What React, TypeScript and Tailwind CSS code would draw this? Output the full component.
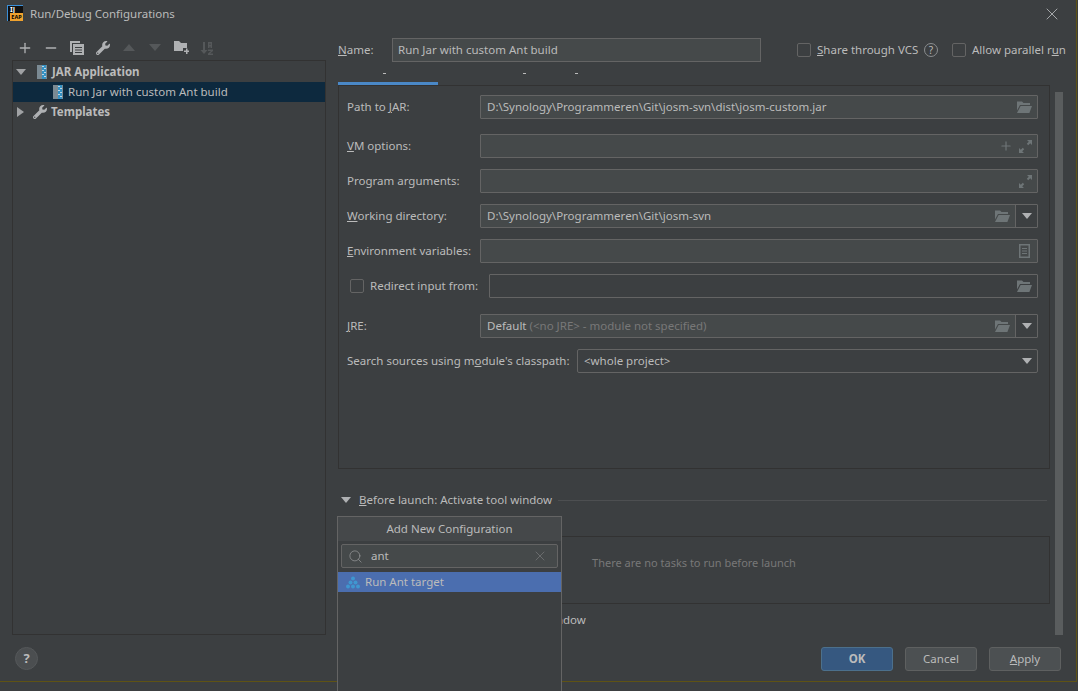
import React from 'react';
import { Plus, Minus, X, Search } from 'lucide-react';
import { FaWrench } from 'react-icons/fa';

const Folder = () => (
  <svg width="16" height="14" viewBox="0 0 16 14" className="shrink-0">
    <path d="M1 1.5h5l1.5 1.5H14v2H4L1 10.5z" fill="#6e7577" />
    <path d="M4.6 6H16l-2.6 7H1z" fill="#6e7577" />
  </svg>
);

const Expand = () => (
  <svg width="13" height="13" viewBox="0 0 13 13" className="shrink-0">
    <path d="M8 0h5v5l-1.8-1.8-2 2-1.4-1.4 2-2z" fill="#6e7577" />
    <path d="M0 8v5h5l-1.8-1.8 2-2-1.4-1.4-2 2z" fill="#6e7577" />
  </svg>
);

const JarIcon = () => (
  <svg width="10" height="14" viewBox="0 0 10 14" className="shrink-0">
    <rect x="0" y="0" width="10" height="14" fill="#7b8a93" />
    <rect x="5" y="0" width="4" height="14" fill="#3592c4" />
    <path d="M5 1h2v1H5zM7 3h2v1H7zM5 5h2v1H5zM7 7h2v1H7zM5 9h2v1H5zM7 11h2v1H7z" fill="#bcd7e8" />
  </svg>
);

const Caret = ({ color = '#afb1b3' }: { color?: string }) => (
  <svg width="10" height="6" viewBox="0 0 10 6" className="shrink-0">
    <path d="M0 0h10L5 6z" fill={color} />
  </svg>
);

const Check = () => <div className="w-[14px] h-[14px] rounded-[2px] border border-[#646464] bg-[#3c3f41] shrink-0" />;

const Tool = ({ children }: { children: React.ReactNode }) => (
  <div className="w-[26px] flex items-center justify-center">{children}</div>
);

const Field = ({
  value,
  children,
  dropdown,
  plain,
}: {
  value?: React.ReactNode;
  children?: React.ReactNode;
  dropdown?: boolean;
  plain?: boolean;
}) => (
  <div className="flex-1 h-6 flex border border-[#646464] rounded-[1px]">
    <div className={`flex-1 flex items-center pl-[6px] pr-[5px] ${plain ? 'bg-[#3c3f41]' : 'bg-[#45494a]'}`}>
      <span className="flex-1 truncate">{value}</span>
      <div className="flex items-center gap-[6px]">{children}</div>
    </div>
    {dropdown && (
      <div className="w-[22px] flex items-center justify-center border-l border-[#646464]">
        <Caret />
      </div>
    )}
  </div>
);

const Row = ({ label, className, children }: { label: React.ReactNode; className: string; children: React.ReactNode }) => (
  <div className={`flex items-center h-6 ${className}`}>
    <div className="w-[133px] shrink-0">{label}</div>
    {children}
  </div>
);

const App = () => {
  return (
    <div className="relative w-[1078px] h-[691px] overflow-hidden bg-[#3c3f41] text-[#bbbbbb] text-[11.5px] font-['Noto_Sans',sans-serif]">
      <div className="w-[1077px] h-[682px] border-r border-b border-[#5f5314] flex flex-col">
        {/* Title bar */}
        <div className="h-[28px] shrink-0 flex items-center pl-[7px] pr-[14px]">
          <div className="w-[16px] h-[16px] mb-[2px] bg-[#111] border-t border-l border-[#3b8fd8] flex flex-col leading-none overflow-hidden">
            <span className="text-[7px] font-bold text-white h-[7px] leading-[7px] pl-[2px]">IJ</span>
            <span className="text-[5.5px] font-bold text-black bg-[#f0a22e] ml-[2px] text-center h-[8px] leading-[8px]">EAP</span>
          </div>
          <span className="ml-[7px] flex-1">Run/Debug Configurations</span>
          <X size={20} strokeWidth={1.1} color="#afb1b3" />
        </div>

        <div className="flex flex-1 min-h-0">
          {/* Left column */}
          <div className="w-[314px] ml-[12px] flex flex-col shrink-0">
            <div className="h-[32px] pt-[7px] flex items-center">
              <Tool><Plus size={16} strokeWidth={2} color="#afb1b3" /></Tool>
              <Tool><Minus size={16} strokeWidth={2} color="#afb1b3" /></Tool>
              <Tool>
                <svg width="14" height="14" viewBox="0 0 14 14">
                  <path d="M0 0h10v2H2v9H0z" fill="#afb1b3" />
                  <path d="M3 3h11v11H3zM5 6v1h7V6zm0 2.500v1h7v-1zm0 2.500v1h7v-1z" fill="#afb1b3" fillRule="evenodd" />
                </svg>
              </Tool>
              <Tool><FaWrench size={14} color="#afb1b3" /></Tool>
              <Tool><svg width="12" height="7" viewBox="0 0 12 7"><path d="M0 7h12L6 0z" fill="#55585a" /></svg></Tool>
              <Tool><svg width="12" height="7" viewBox="0 0 12 7"><path d="M0 0h12L6 7z" fill="#55585a" /></svg></Tool>
              <Tool>
                <svg width="15" height="13" viewBox="0 0 15 13">
                  <path d="M0 0h5l2 2h6v5H9v3H0z" fill="#afb1b3" />
                  <path d="M12 7.500h1.500v2H15V11h-1.500v2H12v-2h-2V9.500h2z" fill="#afb1b3" />
                </svg>
              </Tool>
              <Tool>
                <svg width="14" height="14" viewBox="0 0 14 14">
                  <path d="M3 1h2v8h2.500L4 13 .5 9H3z" fill="#55585a" />
                  <path d="M8 1h4v6h-1.500V5.500h-1V7H8zM9.500 2.500v1.500h1V2.500zM8 8.500h5V10l-3 2.500h3V14H8v-1.500l3-2.500H8z" fill="#55585a" fillRule="evenodd" />
                </svg>
              </Tool>
            </div>
            <div className="flex-1 border border-[#323232] pt-px">
              <div className="h-5 flex items-center pl-[3px] font-bold">
                <Caret color="#a0a2a4" />
                <span className="ml-[11px]"><JarIcon /></span>
                <span className="ml-[5px]">JAR Application</span>
              </div>
              <div className="h-5 flex items-center pl-[40px] bg-[#0d293e]">
                <JarIcon />
                <span className="ml-[5px]">Run Jar with custom Ant build</span>
              </div>
              <div className="h-5 flex items-center pl-[4px] font-bold">
                <svg width="7" height="10" viewBox="0 0 7 10"><path d="M0 0v10l7-5z" fill="#a0a2a4" /></svg>
                <FaWrench size={14} color="#afb1b3" className="ml-[9px]" />
                <span className="ml-[4px]">Templates</span>
              </div>
            </div>
          </div>

          {/* Right column */}
          <div className="w-[712px] ml-[12px] shrink-0 flex flex-col">
            <div className="h-6 mt-[10px] flex items-center">
              <span className="w-[54px] shrink-0"><u>N</u>ame:</span>
              <div className="w-[369px] shrink-0 h-6 bg-[#45494a] border border-[#646464] flex items-center pl-[5px]">Run Jar with custom Ant build</div>
              <div className="ml-[36px] flex items-center shrink-0 whitespace-nowrap">
                <Check />
                <span className="ml-[6px] w-[101px]"><u>S</u>hare through VCS</span>
                <span className="ml-[6px] w-[14px] h-[14px] rounded-full border border-[#8a8d8f] text-[10px] flex items-center justify-center">?</span>
                <span className="ml-[14px]"><Check /></span>
                <span className="ml-[6px]">Allow parallel r<u>u</u>n</span>
              </div>
            </div>

            {/* Tab strip, the labels sit behind the name row */}
            <div className="h-[23px] relative shrink-0">
              <div className="absolute left-0 bottom-0 w-[100px] h-[3px] bg-[#4a88c7]" />
              <div className="absolute left-[45px] top-[11px] w-[3px] h-px bg-[#bbbbbb]" />
              <div className="absolute left-[185px] top-[11px] w-[3px] h-px bg-[#bbbbbb]" />
              <div className="absolute left-[237px] top-[11px] w-[3px] h-px bg-[#bbbbbb]" />
            </div>

            <div className="h-[384px] shrink-0 border border-[#323232] pl-2 pr-[11px] pt-[9px]">
              <Row label={<>Path to <u>J</u>AR:</>} className="">
                <Field value="D:\Synology\Programmeren\Git\josm-svn\dist\josm-custom.jar"><Folder /></Field>
              </Row>
              <Row label={<><u>V</u>M options:</>} className="mt-[15px]">
                <Field><Plus size={14} color="#6e7577" strokeWidth={2} /><Expand /></Field>
              </Row>
              <Row label="Program arguments:" className="mt-[11px]">
                <Field><Expand /></Field>
              </Row>
              <Row label={<><u>W</u>orking directory:</>} className="mt-[11px]">
                <Field value="D:\Synology\Programmeren\Git\josm-svn" dropdown><Folder /></Field>
              </Row>
              <Row label={<><u>E</u>nvironment variables:</>} className="mt-[11px]">
                <Field>
                  <svg width="11" height="14" viewBox="0 0 11 14" className="mr-[2px]"><path d="M0 0h11v14H0zM1.500 1.500v11h8v-11zM3 4h5v1H3zM3 6.500h5v1H3zM3 9h5v1H3z" fill="#6e7577" fillRule="evenodd" /></svg>
                </Field>
              </Row>
              <div className="flex items-center h-6 mt-[11px] pl-[3px]">
                <Check />
                <span className="ml-[6px] w-[119px] shrink-0">Redirect input from:</span>
                <Field plain><Folder /></Field>
              </div>
              <Row label={<><u>J</u>RE:</>} className="mt-[16px]">
                <Field value={<>Default <span className="text-[#787878]">(&lt;no JRE&gt; - module not specified)</span></>} dropdown><Folder /></Field>
              </Row>
              <div className="flex items-center h-6 mt-[11px]">
                <span className="w-[230px] shrink-0 whitespace-nowrap">Search sources using m<u>o</u>dule's classpath:</span>
                <div className="flex-1 h-6 flex items-center justify-between border border-[#646464] rounded-[2px] pl-[6px] pr-[5px]">
                  <span>&lt;whole project&gt;</span>
                  <Caret />
                </div>
              </div>
            </div>

            <div className="flex items-center h-4 mt-[23px] pl-[3px]">
              <Caret />
              <span className="ml-[8px] whitespace-nowrap"><u>B</u>efore launch: Activate tool window</span>
              <div className="flex-1 h-px bg-[#4d4f51] ml-[6px] mr-[3px]" />
            </div>

            <div className="h-[68px] mt-[28px] shrink-0 border border-[#323232] flex items-center justify-center text-[#787878] text-[11px]">
              <span className="mb-[14px]">There are no tasks to run before launch</span>
            </div>

            <div className="mt-[7px] pl-[136px] whitespace-nowrap">Activate tool window</div>
          </div>

          {/* Scrollbar */}
          <div className="w-2 ml-[5px] mt-[64px] bg-[#5a5d5e] shrink-0" />
        </div>

        {/* Footer */}
        <div className="h-[46px] shrink-0 flex items-start pt-[12px] pl-[15px] pr-[15px]">
          <div className="w-[23px] h-[23px] rounded-full bg-[#4b4e50] border border-[#55585a] flex items-center justify-center font-bold text-[13px]">?</div>
          <div className="flex-1" />
          <div className="flex gap-[12px]">
            <button className="w-[72px] h-6 rounded-[3px] bg-[#365880] border border-[#4c708c] font-bold text-[#bbbbbb]">OK</button>
            <button className="w-[72px] h-6 rounded-[3px] bg-[#4c5052] border border-[#5e6060] text-[#bbbbbb]">Cancel</button>
            <button className="w-[72px] h-6 rounded-[3px] bg-[#4c5052] border border-[#5e6060] text-[#bbbbbb]"><u>A</u>pply</button>
          </div>
        </div>
      </div>

      {/* Popup over the before launch list */}
      <div className="absolute left-[337px] top-[516px] w-[225px] h-[180px] bg-[#3c3f41] border border-[#646464]">
        <div className="h-[24px] bg-[#45484a] flex items-center justify-center">Add New Configuration</div>
        <div className="mx-[3px] mt-[3px] h-6 bg-[#45494a] border border-[#646464] rounded-[2px] flex items-center pl-[6px] pr-[9px]">
          <Search size={15} strokeWidth={1.1} color="#9a9c9e" />
          <span className="ml-[8px] flex-1">ant</span>
          <X size={16} strokeWidth={1} color="#7b7d7f" />
        </div>
        <div className="h-5 mt-[4px] bg-[#4b6eaf] flex items-center pl-[8px]">
          <svg width="14" height="13" viewBox="0 0 14 13">
            <g fill="#3f97d0">
              <circle cx="7" cy="2.500" r="2" /><circle cx="4.500" cy="6.500" r="2" /><circle cx="9.500" cy="6.500" r="2" />
              <circle cx="2" cy="10.500" r="2" /><circle cx="7" cy="10.500" r="2" /><circle cx="12" cy="10.500" r="2" />
            </g>
          </svg>
          <span className="ml-[5px]">Run Ant target</span>
        </div>
      </div>
    </div>
  );
};

export default App;
